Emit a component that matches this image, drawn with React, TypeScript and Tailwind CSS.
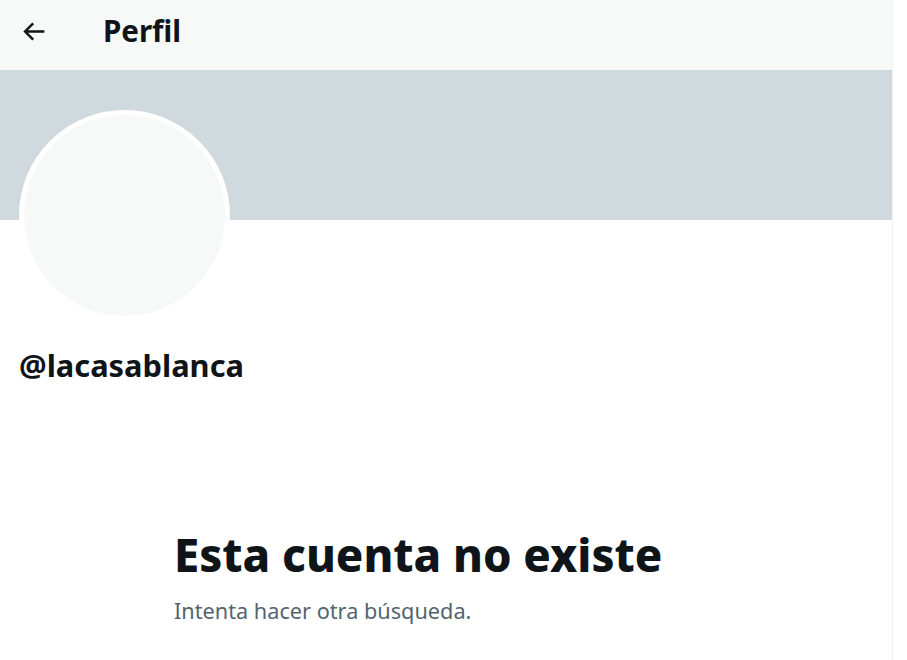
const font = { fontFamily: '"Noto Sans", "Liberation Sans", sans-serif' };

function BackArrow() {
  return (
    <svg viewBox="0 0 24 24" width={29} height={29} fill="currentColor" aria-hidden="true">
      <path d="M7.414 13l5.043 5.04-1.414 1.42L3.586 12l7.457-7.46 1.414 1.42L7.414 11H21v2H7.414z" />
    </svg>
  );
}

export default function App() {
  return (
    <div className="flex min-h-[660px] bg-white text-[#0f1419]" style={font}>
      <main className="w-[893px] border-r border-[#eff3f4]">
        <header className="flex h-[70px] items-center bg-[#f7f9f9] pb-[8px]">
          <div className="flex w-[103px] items-center pl-[19px]">
            <BackArrow />
          </div>
          <h1 className="text-[29.5px] font-bold leading-none">Perfil</h1>
        </header>

        <div className="h-[150px] bg-[#cfd9de]" />

        <div className="px-[19px]">
          <div className="-mt-[110px] h-[211px] w-[211px] rounded-full border-[5px] border-white bg-[#f7f9f9]" />
          <div className="mt-[26px] text-[30.8px] font-bold leading-[36px]">@lacasablanca</div>
        </div>

        <section className="pl-[174px] pt-[143px]">
          <h2 className="text-[45.4px] font-extrabold leading-[56px]">Esta cuenta no existe</h2>
          <p className="mt-[15px] text-[21.7px] leading-[28px] text-[#536471]">Intenta hacer otra búsqueda.</p>
        </section>
      </main>
    </div>
  );
}
